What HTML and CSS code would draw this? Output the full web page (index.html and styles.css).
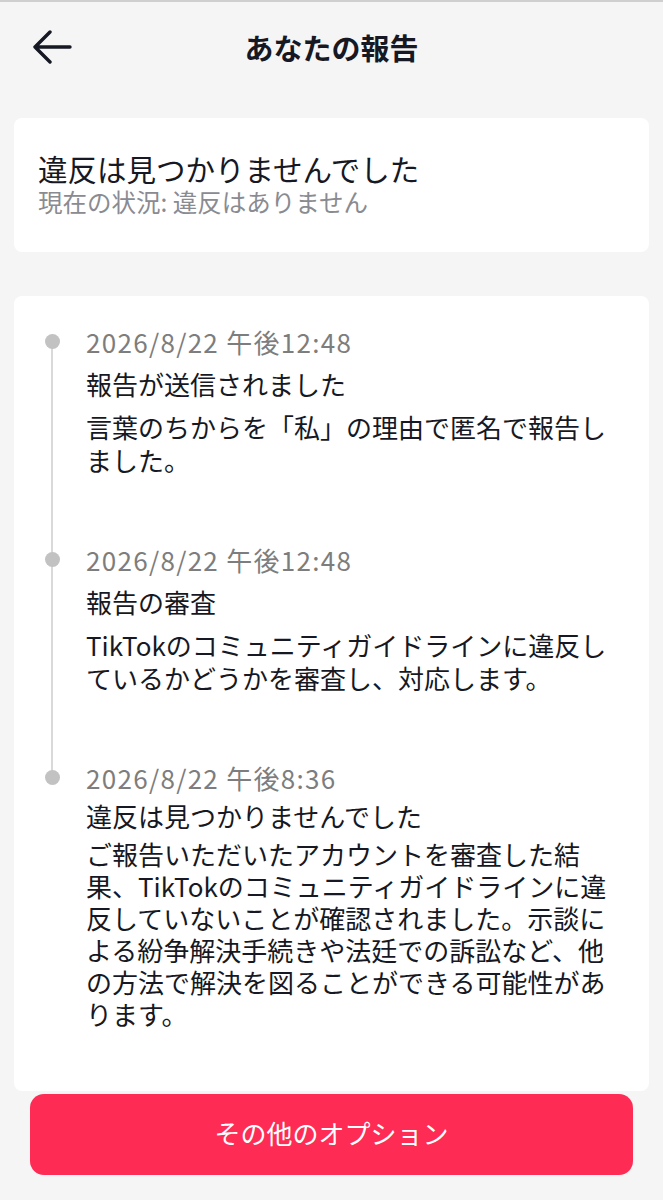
FILE: index.html
```html
<!DOCTYPE html>
<html lang="ja">
<head>
<meta charset="utf-8">
<title>あなたの報告</title>
<link rel="stylesheet" href="styles.css">
</head>
<body>
<div class="page">
  <header class="topbar">
    <button class="back" aria-label="戻る">
      <svg width="40" height="34" viewBox="0 0 40 34"><path d="M18 2 L3 17 L18 32 M3 17 H38" fill="none" stroke="#161823" stroke-width="3.4" stroke-linecap="round" stroke-linejoin="round"/></svg>
    </button>
    <h1 class="title">あなたの報告</h1>
    <span></span>
  </header>

  <section class="card status">
    <div class="status-title">違反は見つかりませんでした</div>
    <div class="status-sub">現在の状況: 違反はありません</div>
  </section>

  <section class="card timeline">
    <div class="entry">
      <div class="rail"><span class="dot"></span></div>
      <div class="content">
        <div class="date">2026/8/22 午後12:48</div>
        <div class="head">報告が送信されました</div>
        <p class="body">言葉のちからを「私」の理由で匿名で報告しました。</p>
      </div>
    </div>
    <div class="entry">
      <div class="rail"><span class="dot"></span></div>
      <div class="content">
        <div class="date">2026/8/22 午後12:48</div>
        <div class="head">報告の審査</div>
        <p class="body">TikTokのコミュニティガイドラインに違反しているかどうかを審査し、対応します。</p>
      </div>
    </div>
    <div class="entry last">
      <div class="rail"><span class="dot"></span></div>
      <div class="content">
        <div class="date">2026/8/22 午後8:36</div>
        <div class="head">違反は見つかりませんでした</div>
        <p class="body">ご報告いただいたアカウントを審査した結果、TikTokのコミュニティガイドラインに違反していないことが確認されました。示談による紛争解決手続きや法廷での訴訟など、他の方法で解決を図ることができる可能性があります。</p>
      </div>
    </div>
  </section>

  <button class="options">その他のオプション</button>
</div>
</body>
</html>
```

FILE: styles.css
```css
* { box-sizing: border-box; }
html, body { margin: 0; padding: 0; }
body {
  background: #f5f5f5;
  font-family: "Noto Sans CJK JP", "Noto Sans", sans-serif;
  color: #161823;
}
.page {
  width: 663px;
  height: 1200px;
  border-top: 2px solid #cfcfcf;
  display: flex;
  flex-direction: column;
}
.topbar {
  height: 90px;
  display: grid;
  grid-template-columns: 1fr auto 1fr;
  align-items: center;
}
.back {
  justify-self: start;
  margin-left: 32px;
  padding: 0;
  border: 0;
  background: none;
  width: 40px;
  height: 34px;
  display: flex;
}
.title {
  margin: 0;
  font-size: 29px;
  font-weight: 600;
  line-height: 36px;
}
.card {
  background: #fff;
  border-radius: 8px;
  margin: 0 14px;
}
.status {
  margin-top: 26px;
  padding: 32px 24px 34px;
}
.status-title {
  font-size: 29.5px;
  line-height: 36px;
}
.status-sub {
  font-size: 24.5px;
  line-height: 32px;
  color: #8a8b91;
}
.timeline {
  margin-top: 44px;
  padding: 28px 35px 61px 30px;
}
.entry {
  display: grid;
  grid-template-columns: 16px 1fr;
  column-gap: 26px;
}
.rail {
  position: relative;
}
.entry:not(.last) .rail::before {
  content: "";
  position: absolute;
  left: 7px;
  width: 2px;
  top: 18px;
  bottom: -18px;
  background: #d9d9d9;
}
.dot {
  position: relative;
  display: block;
  width: 15px;
  height: 15px;
  margin: 10px 0 0 0.5px;
  border-radius: 50%;
  background: #c2c2c2;
}
.content {
  padding-bottom: 66px;
}
.entry.last .content { padding-bottom: 0; }
.date {
  font-size: 26px;
  line-height: 36px;
  letter-spacing: 1.3px;
  color: #7d7d7d;
}
.head {
  margin-top: 6px;
  font-size: 26px;
  line-height: 36px;
}
.body {
  margin: 8px 0 0;
  font-size: 26px;
  line-height: 33px;
}
.entry.last .head { margin-top: 2px; }
.entry.last .body { margin-top: 4px; line-height: 32px; }
.options {
  margin: 3px 30px 0;
  height: 81px;
  border: 0;
  border-radius: 14px;
  background: #fe2c55;
  color: #fff;
  font-family: "Noto Sans CJK JP", "Noto Sans", sans-serif;
  font-size: 26px;
  line-height: 36px;
  padding: 0 0 4px;
}
```
